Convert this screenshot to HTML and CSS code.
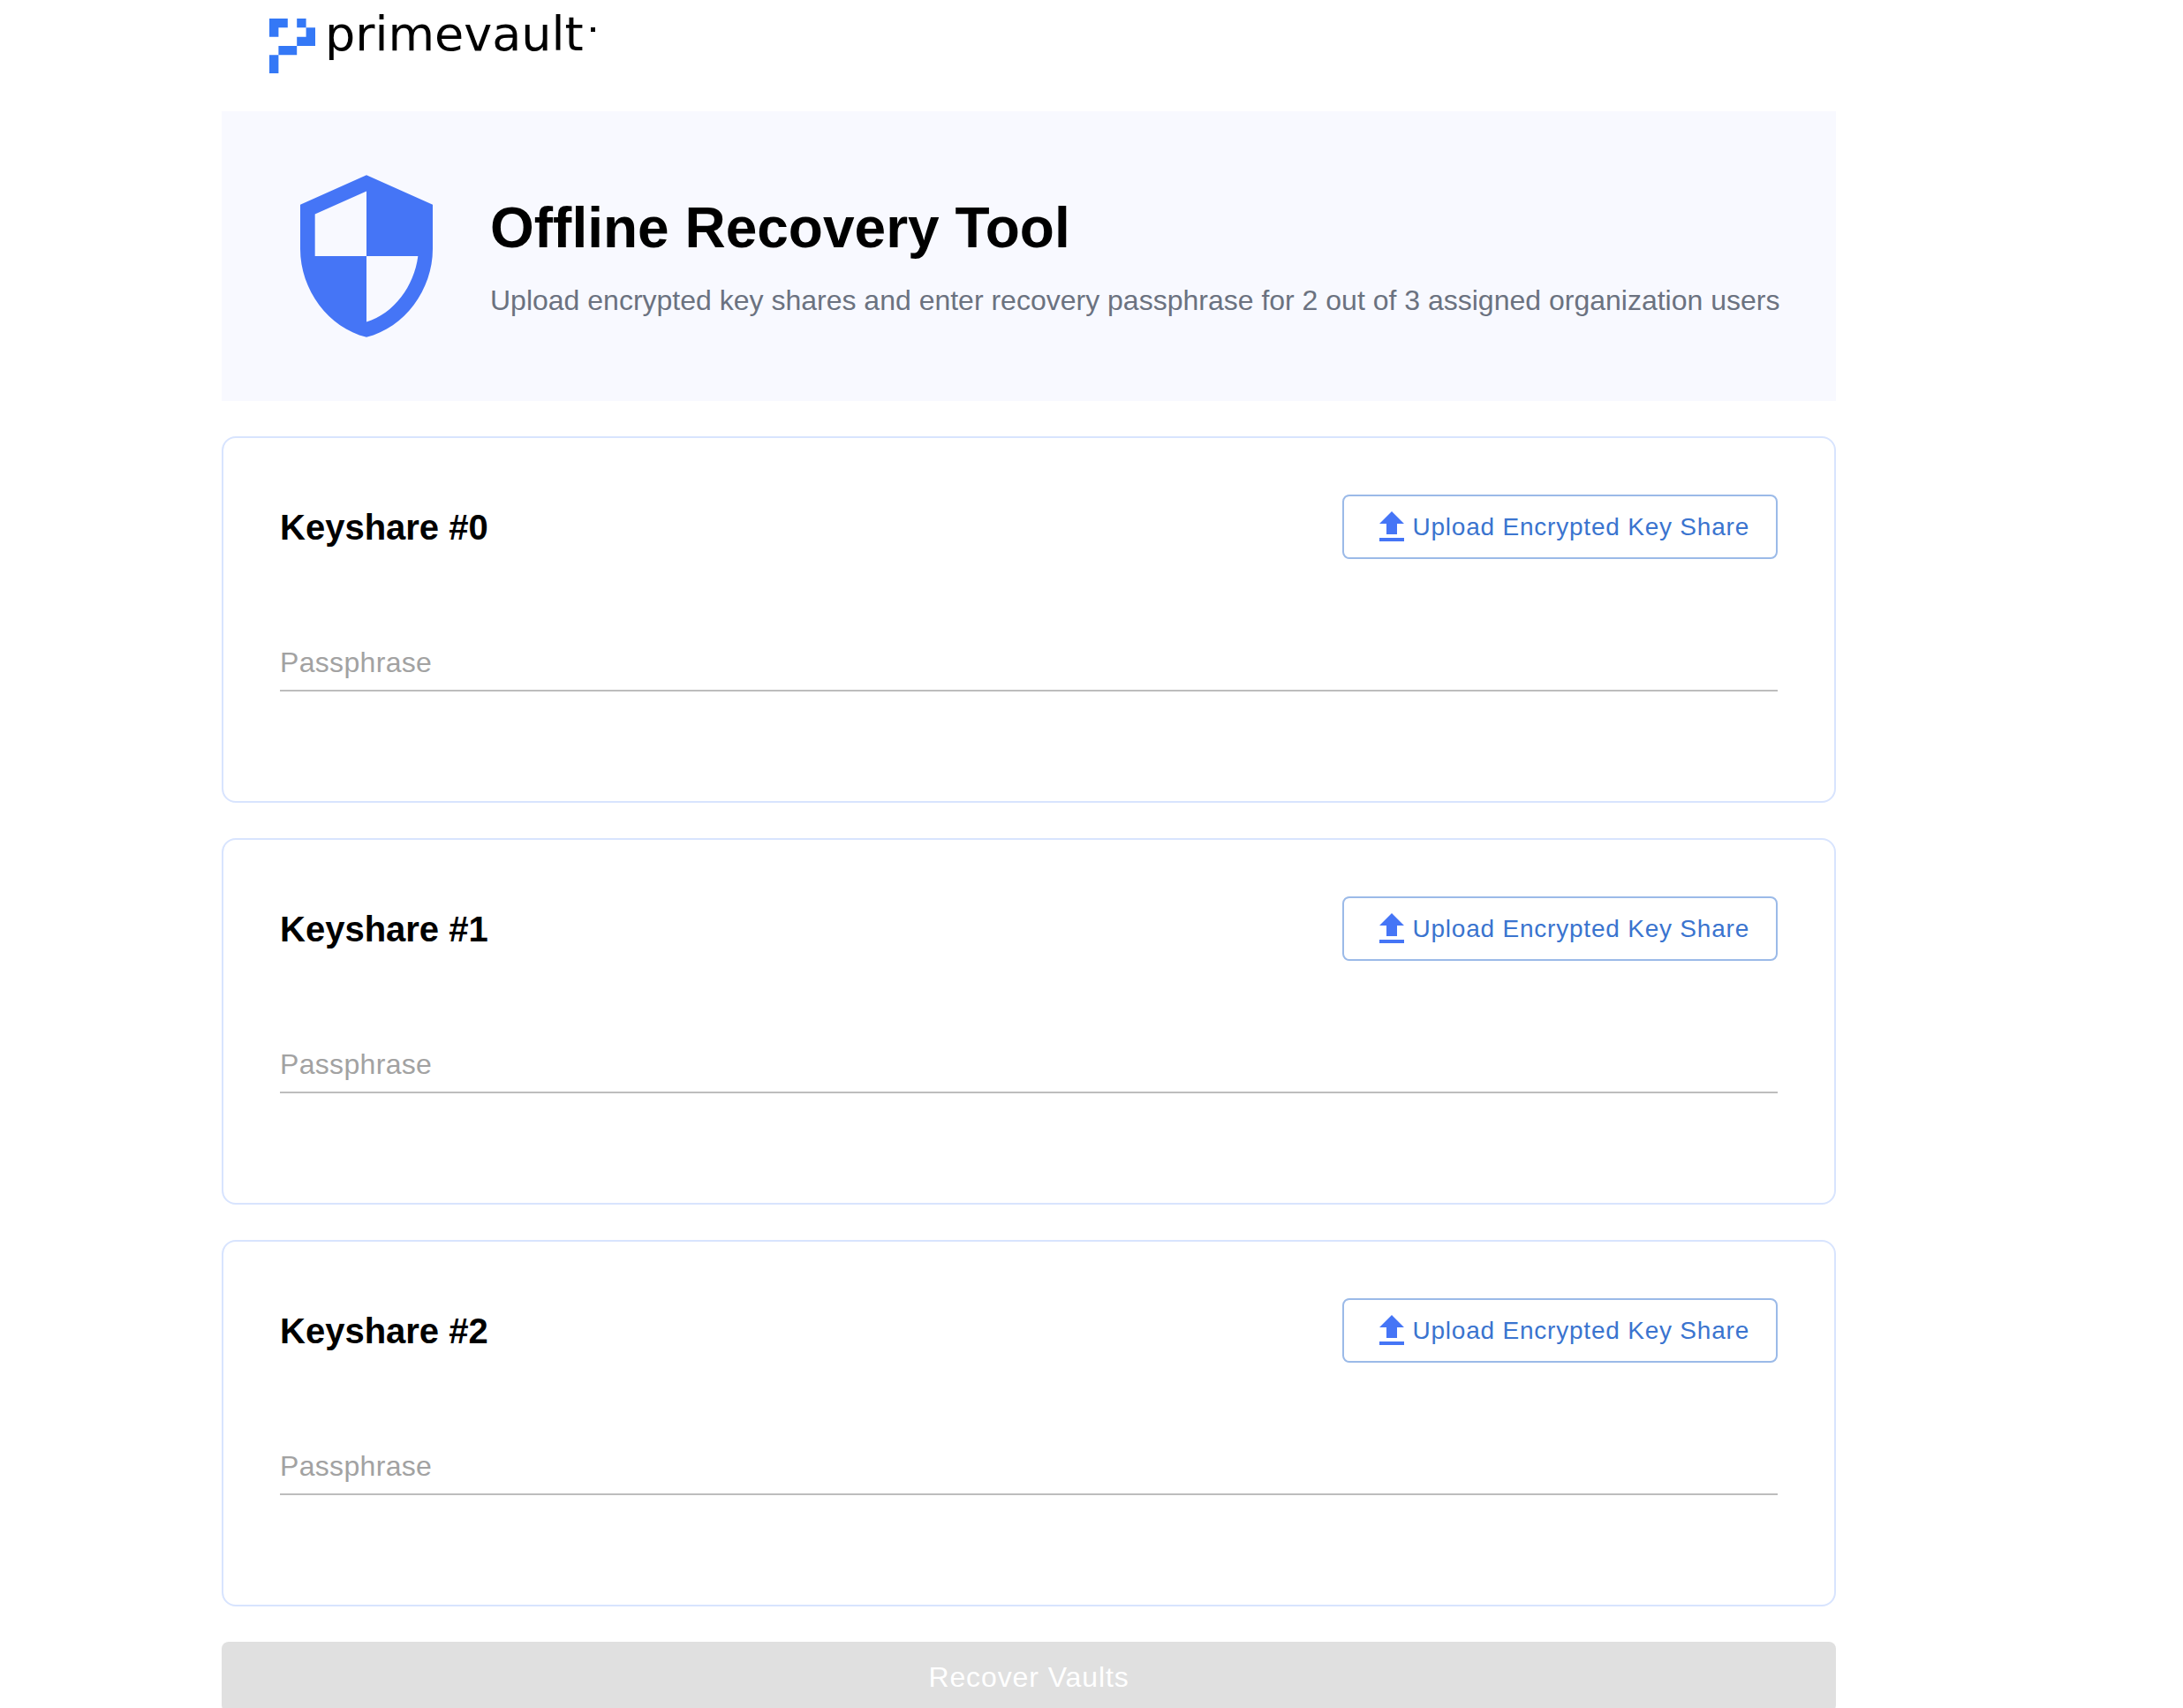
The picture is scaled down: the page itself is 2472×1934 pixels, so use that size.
FILE: index.html
```html
<!DOCTYPE html>
<html lang="en">
<head>
<meta charset="utf-8">
<title>Offline Recovery Tool</title>
<link rel="stylesheet" href="styles.css">
</head>
<body>
<svg class="sprite" aria-hidden="true">
  <symbol id="upload" viewBox="0 0 24 24"><path d="M9 16h6v-6h4l-7-7-7 7h4zm-4 2h14v2H5z"/></symbol>
</svg>
<div class="page">
  <header class="brand">
    <svg class="brand-mark" viewBox="0 0 5 6" preserveAspectRatio="none" aria-hidden="true"><path d="M0 0h2v1H1v1H0zM3 0h1v1H3zM4 1h1v2H3V2h1zM1 3h2v1H1zM0 4h1v2H0z"/></svg>
    <span class="brand-name">primevault</span>
    <span class="brand-dot"></span>
  </header>
  <main class="content">
    <section class="hero">
      <svg class="hero-icon" viewBox="0 0 24 24" aria-hidden="true"><path d="M12 1 3 5v6c0 5.550 3.840 10.740 9 12 5.160-1.260 9-6.450 9-12V5l-9-4zm0 10.990h7c-.53 4.120-3.280 7.790-7 8.940V12H5V6.300l7-3.110v8.800z"/></svg>
      <div class="hero-text">
        <h1 class="hero-title">Offline Recovery Tool</h1>
        <p class="hero-note">Upload encrypted key shares and enter recovery passphrase for 2 out of 3 assigned organization users</p>
      </div>
    </section>
    <form class="shares">
      <section class="card">
        <div class="card-head">
          <h2 class="card-title">Keyshare #0</h2>
          <button class="upload" type="button"><svg class="upload-icon" aria-hidden="true"><use href="#upload"/></svg>Upload Encrypted Key Share</button>
        </div>
        <input class="passphrase" type="password" placeholder="Passphrase" aria-label="Passphrase for keyshare 0">
      </section>
      <section class="card">
        <div class="card-head">
          <h2 class="card-title">Keyshare #1</h2>
          <button class="upload" type="button"><svg class="upload-icon" aria-hidden="true"><use href="#upload"/></svg>Upload Encrypted Key Share</button>
        </div>
        <input class="passphrase" type="password" placeholder="Passphrase" aria-label="Passphrase for keyshare 1">
      </section>
      <section class="card">
        <div class="card-head">
          <h2 class="card-title">Keyshare #2</h2>
          <button class="upload" type="button"><svg class="upload-icon" aria-hidden="true"><use href="#upload"/></svg>Upload Encrypted Key Share</button>
        </div>
        <input class="passphrase" type="password" placeholder="Passphrase" aria-label="Passphrase for keyshare 2">
      </section>
      <button class="recover" type="submit" disabled>Recover Vaults</button>
    </form>
  </main>
</div>
</body>
</html>
```
FILE: styles.css
```css
* { box-sizing: border-box; }

body {
  margin: 0;
  background: #fff;
  color: #000;
  font-family: "Liberation Sans", Arial, sans-serif;
}

h1, h2, p { margin: 0; }

.sprite { display: none; }

.page { padding: 0 393px 0 251px; }

.brand {
  display: flex;
  align-items: flex-start;
  padding: 21px 54px 43px;
}

.brand-mark {
  width: 52px;
  height: 62px;
  margin-right: 11px;
  fill: #3478f6;
}

.brand-name {
  font-family: "DejaVu Sans", sans-serif;
  font-size: 54px;
  line-height: 36px;
}

.brand-dot {
  width: 5px;
  height: 5px;
  margin: 10px 0 0 8px;
  background: #000;
}

.content, .shares {
  display: flex;
  flex-direction: column;
  gap: 40px;
}

.hero {
  display: flex;
  align-items: center;
  gap: 40px;
  padding: 64px 48px 64px 64px;
  background: #f8f9ff;
}

.hero-icon {
  flex: none;
  width: 200px;
  height: 200px;
  fill: #4575f6;
}

.hero-text {
  display: flex;
  flex-direction: column;
  gap: 24px;
}

.hero-title {
  font-size: 64px;
  line-height: 76px;
}

.hero-note {
  color: #6b7280;
  font-size: 32px;
  line-height: 40px;
}

.card {
  padding: 64px 64px 124px;
  border: 2px solid #d8e4fe;
  border-radius: 16px;
}

.card-head {
  display: flex;
  align-items: center;
  justify-content: space-between;
  margin-bottom: 84px;
}

.card-title {
  font-size: 40px;
  line-height: 48px;
}

.upload {
  display: flex;
  align-items: center;
  padding: 10px 30px;
  border: 2px solid #9bbae8;
  border-radius: 8px;
  background: #fff;
  color: #3a74cf;
  font-family: inherit;
  font-size: 28px;
  letter-spacing: 0.028em;
  line-height: 49px;
}

.upload-icon {
  width: 48px;
  height: 48px;
  fill: #4575f6;
}

.passphrase {
  display: block;
  width: 100%;
  height: 66px;
  padding: 10px 0 8px;
  border: 0;
  border-bottom: 2px solid #bdbdbd;
  background: none;
  color: #000;
  font-family: inherit;
  font-size: 32px;
  letter-spacing: 0.01em;
}

.passphrase::placeholder {
  color: #a2a2a2;
  opacity: 1;
}

.recover {
  padding: 16px;
  border: 0;
  border-radius: 8px;
  background: #e0e0e0;
  color: #fff;
  font-family: inherit;
  font-size: 32px;
  letter-spacing: 0.028em;
  line-height: 48px;
}
```
